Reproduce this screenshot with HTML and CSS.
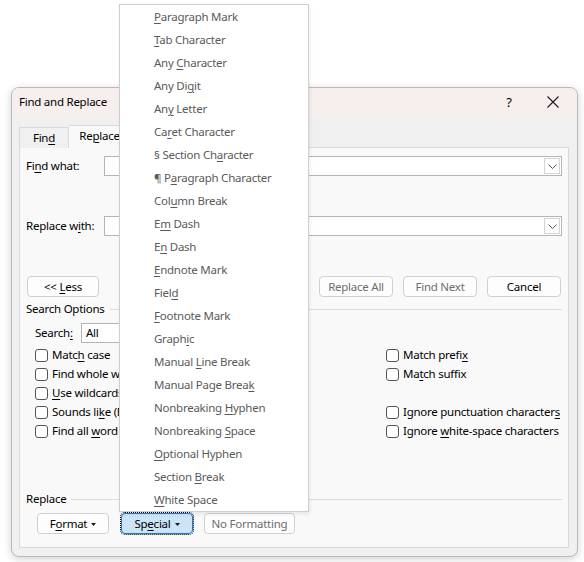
FILE: index.html
```html
<!DOCTYPE html>
<html>
<head>
<meta charset="utf-8">
<link rel="stylesheet" href="styles.css">
</head>
<body>
<div class="dialog">
  <div class="titlebar">
    <span class="title">Find and Replace</span>
    <span class="tb-btn help">?</span>
    <span class="tb-btn close"><svg width="12" height="12" viewBox="0 0 12 12"><path d="M0.5 0.5 L11.5 11.5 M11.5 0.5 L0.5 11.5" stroke="#1a1a1a" stroke-width="1.1" fill="none"/></svg></span>
  </div>
  <div class="body">
    <div class="tabs">
      <div class="tab"><span>Fin<u>d</u></span></div>
      <div class="tab active"><span>Re<u>p</u>lace</span></div>
      <div class="tab"><span><u>G</u>o To</span></div>
    </div>
    <div class="panel">
      <div class="field-row">
        <span class="field-label">Fi<u>n</u>d what:</span>
        <div class="combo"><span class="combo-btn"><svg width="9" height="5" viewBox="0 0 9 5"><path d="M0.5 0.5 L4.5 4.5 L8.5 0.5" stroke="#555" stroke-width="1" fill="none"/></svg></span></div>
      </div>
      <div class="field-row replace-row">
        <span class="field-label">Replace w<u>i</u>th:</span>
        <div class="combo"><span class="combo-btn"><svg width="9" height="5" viewBox="0 0 9 5"><path d="M0.5 0.5 L4.5 4.5 L8.5 0.5" stroke="#555" stroke-width="1" fill="none"/></svg></span></div>
      </div>
      <div class="btn-row">
        <span class="btn less"><span>&lt;&lt; <u>L</u>ess</span></span>
        <span class="spacer"></span>
        <span class="btn disabled"><span>Replace All</span></span>
        <span class="btn disabled"><span>Find Next</span></span>
        <span class="btn"><span>Cancel</span></span>
      </div>
      <div class="group-head"><span class="gh-text">Search Options</span><span class="rule"></span></div>
      <div class="search-row">
        <span class="search-label">Search<u>:</u></span>
        <div class="select"><span>All</span></div>
      </div>
      <div class="checks">
        <div class="check"><span class="box"></span><span class="lbl">Matc<u>h</u> case</span></div>
        <div class="check"><span class="box"></span><span class="lbl">Match prefi<u>x</u></span></div>
        <div class="check"><span class="box"></span><span class="lbl">Find whole words onl<u>y</u></span></div>
        <div class="check"><span class="box"></span><span class="lbl">Ma<u>t</u>ch suffix</span></div>
        <div class="check"><span class="box"></span><span class="lbl"><u>U</u>se wildcards</span></div>
        <div class="check empty"></div>
        <div class="check"><span class="box"></span><span class="lbl">Sounds li<u>k</u>e (English)</span></div>
        <div class="check"><span class="box"></span><span class="lbl">Ignore punctuation character<u>s</u></span></div>
        <div class="check"><span class="box"></span><span class="lbl">Find all <u>w</u>ord forms (English)</span></div>
        <div class="check"><span class="box"></span><span class="lbl">Ignore <u>w</u>hite-space characters</span></div>
      </div>
      <div class="group-head replace-head"><span class="gh-text">Replace</span><span class="rule"></span></div>
      <div class="bottom-row">
        <span class="btn drop"><span>F<u>o</u>rmat</span><svg class="tri" width="5" height="3" viewBox="0 0 5 3"><path d="M0 0 H5 L2.5 3 Z" fill="#1a1a1a"/></svg></span>
        <span class="btn drop special"><span>Sp<u>e</u>cial</span><svg class="tri" width="5" height="3" viewBox="0 0 5 3"><path d="M0 0 H5 L2.5 3 Z" fill="#1a1a1a"/></svg></span>
        <span class="btn disabled nofmt"><span>No Formatting</span></span>
      </div>
    </div>
  </div>
</div>
<div class="menu">
  <div class="item"><u>P</u>aragraph Mark</div>
  <div class="item"><u>T</u>ab Character</div>
  <div class="item">Any <u>C</u>haracter</div>
  <div class="item">Any Di<u>g</u>it</div>
  <div class="item">An<u>y</u> Letter</div>
  <div class="item">Ca<u>r</u>et Character</div>
  <div class="item">§ Section Ch<u>a</u>racter</div>
  <div class="item">¶ P<u>a</u>ragraph Character</div>
  <div class="item">Col<u>u</u>mn Break</div>
  <div class="item">E<u>m</u> Dash</div>
  <div class="item">E<u>n</u> Dash</div>
  <div class="item"><u>E</u>ndnote Mark</div>
  <div class="item">Fiel<u>d</u></div>
  <div class="item"><u>F</u>ootnote Mark</div>
  <div class="item">Graph<u>i</u>c</div>
  <div class="item">Manual <u>L</u>ine Break</div>
  <div class="item">Manual Page Brea<u>k</u></div>
  <div class="item">Nonbreaking <u>H</u>yphen</div>
  <div class="item">Nonbreaking <u>S</u>pace</div>
  <div class="item"><u>O</u>ptional Hyphen</div>
  <div class="item">Section <u>B</u>reak</div>
  <div class="item"><u>W</u>hite Space</div>
</div>
</body>
</html>
```

FILE: styles.css
```css
* { box-sizing: border-box; }
html, body { margin: 0; padding: 0; background: #ffffff; }
body {
  font-family: "Noto Sans", "Segoe UI", sans-serif;
  font-size: 11.5px;
  letter-spacing: -0.25px;
  color: #000;
  position: relative;
  width: 584px;
  height: 562px;
  overflow: hidden;
}
u { text-decoration: underline; text-underline-offset: 2px; text-decoration-thickness: 1px; }

.dialog {
  margin: 87px 0 0 11px;
  width: 567px;
  height: 470px;
  border: 1px solid #b9b9b9;
  border-radius: 8px;
  background: #f0f0f0;
  box-shadow: 0 2px 8px rgba(0,0,0,0.18);
  display: flex;
  flex-direction: column;
  overflow: hidden;
}
.titlebar {
  height: 30px;
  flex: none;
  background: #f7efee;
  display: flex;
  align-items: center;
  padding-left: 7px;
}
.title { flex: 1; padding-bottom: 4px; }
.tb-btn { display: flex; align-items: center; justify-content: center; }
.help { width: 14px; margin-right: 30px; font-size: 13px; padding-bottom: 3px; }
.close { width: 14px; margin-right: 17px; padding-bottom: 2px; }

.body {
  flex: 1;
  display: flex;
  flex-direction: column;
  padding: 7px 8px 8px 7px;
}
.tabs {
  display: flex;
  align-items: flex-end;
  height: 23px;
  flex: none;
  position: relative;
  z-index: 1;
  margin-bottom: -1px;
}
.tab {
  height: 21px;
  width: 50px;
  display: flex;
  align-items: center;
  justify-content: center;
  border: 1px solid #d9d9d9;
  border-bottom: none;
  background: #f0f0f0;
}
.tab span { padding-bottom: 2px; }
.tab.active {
  height: 23px;
  width: 62px;
  background: #f9f9f9;
  border-left: none;
  padding-bottom: 2px;
}
.tab:last-child { border-left: none; width: 52px; }

.panel {
  flex: 1;
  border: 1px solid #d9d9d9;
  background: #f9f9f9;
  padding: 8px 6px 0 6px;
  display: flex;
  flex-direction: column;
}
.field-row { display: flex; align-items: center; height: 20px; }
.field-label { width: 78px; padding-bottom: 2px; }
.replace-row { margin-top: 40px; }
.combo {
  flex: 1;
  height: 20px;
  border: 1px solid #b4b4b4;
  background: #fff;
  display: flex;
  justify-content: flex-end;
  padding: 1px;
}
.combo-btn {
  width: 16px;
  border: 1px solid #d4d4d4;
  display: flex;
  align-items: center;
  justify-content: center;
}
.btn-row { display: flex; margin-top: 40px; height: 21px; gap: 10px; padding: 0 1px; }
.spacer { flex: 1; }
.btn {
  width: 74px;
  height: 21px;
  border: 1px solid #d0d0d0;
  border-radius: 4px;
  background: #fdfdfd;
  display: flex;
  align-items: center;
  justify-content: center;
  white-space: nowrap;
}
.btn.less { width: 72px; }
.btn.disabled { color: #6d6d6d; }

.group-head { display: flex; align-items: center; height: 16px; margin-top: 4px; }
.gh-text { padding-bottom: 2px; }
.group-head .rule { flex: 1; height: 1px; background: #dcdcdc; margin-left: 5px; }
.search-row { display: flex; align-items: center; margin-top: 6px; margin-left: 9px; height: 20px; }
.search-label { width: 46px; padding-bottom: 2px; }
.select { width: 110px; height: 20px; border: 1px solid #b4b4b4; background: #fff; padding-left: 4px; display: flex; align-items: center; }
.select span { padding-bottom: 2px; }

.checks {
  display: grid;
  grid-template-columns: 351px 1fr;
  grid-auto-rows: 19px;
  margin-top: 3px;
  margin-left: 9px;
}
.check { display: flex; align-items: center; white-space: nowrap; }
.lbl { padding-bottom: 3px; }
.box {
  width: 13px;
  height: 13px;
  border: 1px solid #555;
  border-radius: 3px;
  background: #fff;
  margin-right: 4px;
  flex: none;
}
.replace-head { margin-top: 50px; }
.bottom-row { display: flex; margin-top: 6px; margin-left: 11px; gap: 11px; }
.bottom-row .btn span { padding-bottom: 1px; }
.btn.drop { width: 72px; gap: 4px; }
.tri { margin-top: 1px; }
.btn.special {
  background: #cce4f7;
  border-color: #2c75c4;
  outline: 1px dotted #000;
  outline-offset: 0px;
  margin-left: 1px;
}
.btn.nofmt { width: 91px; }

.menu {
  position: absolute;
  left: 119px;
  top: 4px;
  width: 190px;
  height: 508px;
  background: #fff;
  border: 1px solid #cfcfcf;
  box-shadow: 1px 2px 4px rgba(0,0,0,0.08);
  padding-top: 0;
  z-index: 5;
}
.item {
  display: block;
  height: 23px;
  line-height: 23px;
  padding-left: 34px;
  color: #5a5a5a;
  white-space: nowrap;
}
```
